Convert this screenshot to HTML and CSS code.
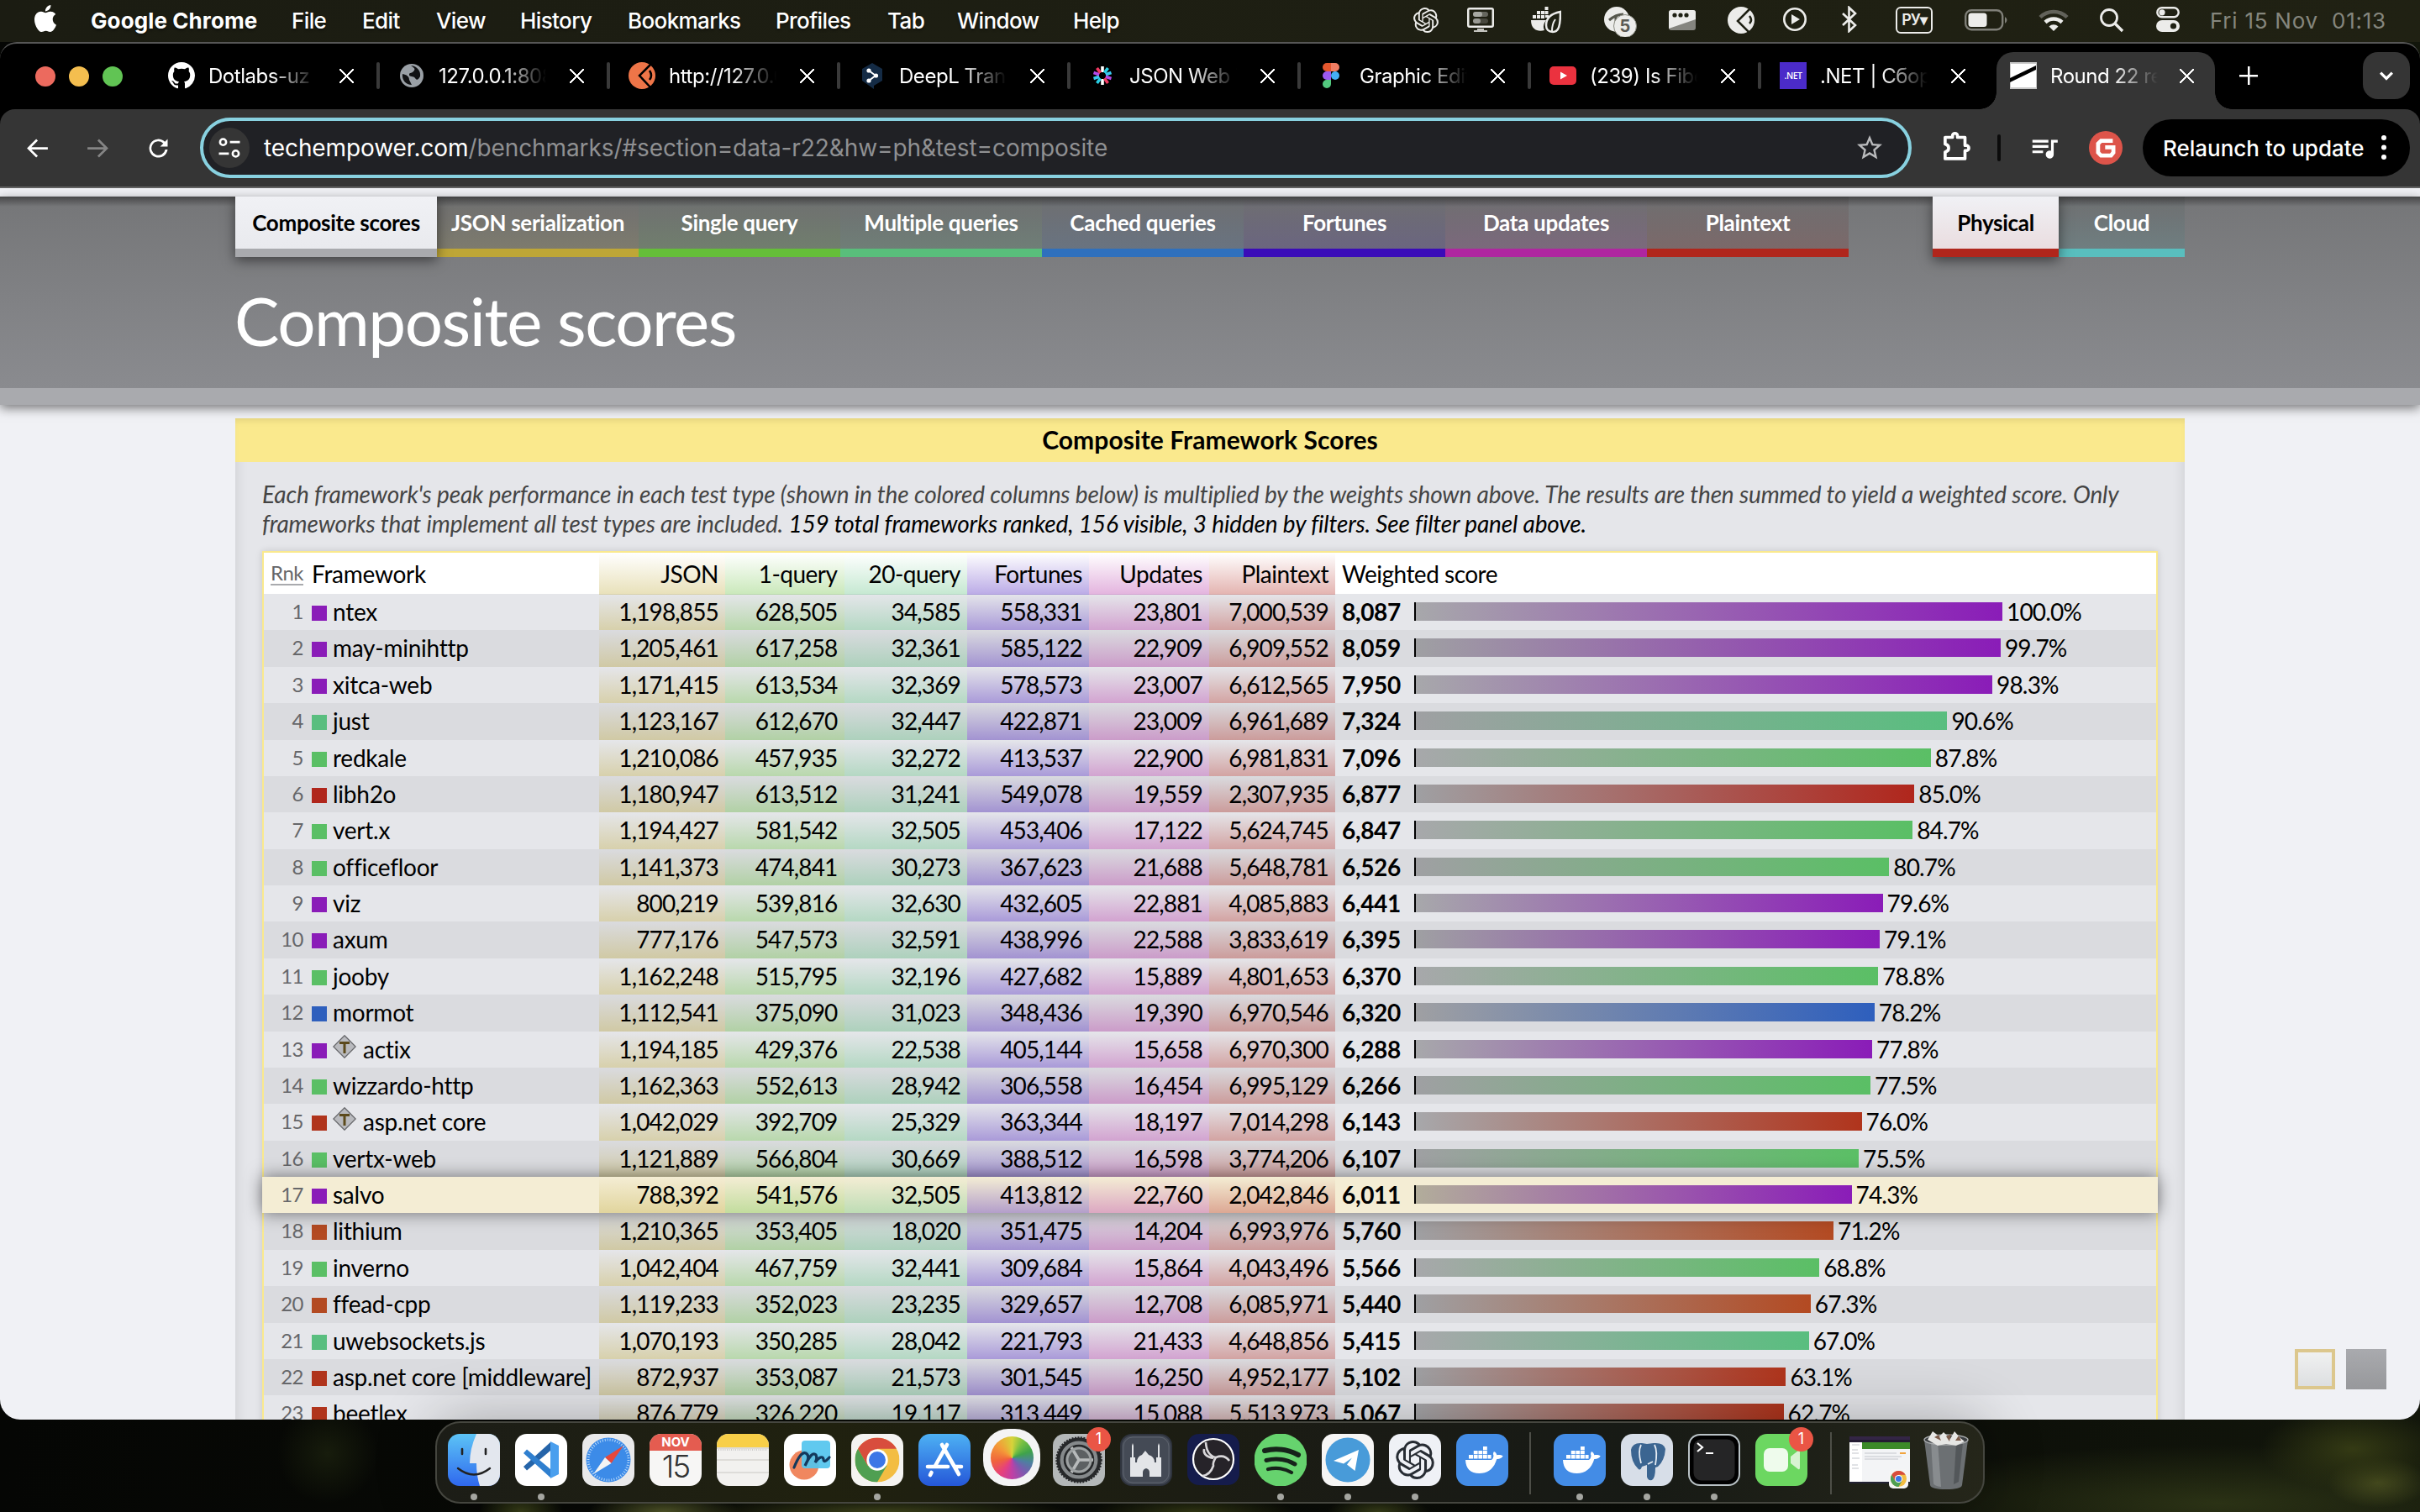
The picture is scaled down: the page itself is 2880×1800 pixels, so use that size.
FILE: index.html
```html
<!DOCTYPE html>
<html lang="en">
<head>
<meta charset="utf-8">
<title>Round 22 results - TechEmpower Framework Benchmarks</title>
<link rel="stylesheet" href="styles.css">
</head>
<body>
<svg class="defs" width="0" height="0" aria-hidden="true">
  <symbol id="gpt" viewBox="0 0 24 24"><path d="M22.2819 9.8211a5.9847 5.9847 0 0 0-.5157-4.9108 6.0462 6.0462 0 0 0-6.5098-2.9A6.0651 6.0651 0 0 0 4.9807 4.1818a5.9847 5.9847 0 0 0-3.9977 2.9 6.0462 6.0462 0 0 0 .7427 7.0966 5.98 5.98 0 0 0 .511 4.9107 6.051 6.051 0 0 0 6.5146 2.9001A5.9847 5.9847 0 0 0 13.2599 24a6.0557 6.0557 0 0 0 5.7718-4.2058 5.9894 5.9894 0 0 0 3.9977-2.9001 6.0557 6.0557 0 0 0-.7475-7.0729zm-9.022 12.6081a4.4755 4.4755 0 0 1-2.8764-1.0408l.1419-.0804 4.7783-2.7582a.7948.7948 0 0 0 .3927-.6813v-6.7369l2.02 1.1686a.071.071 0 0 1 .038.0615v5.5826a4.504 4.504 0 0 1-4.4945 4.4944zm-9.6607-4.1254a4.4708 4.4708 0 0 1-.5346-3.0137l.142.0852 4.783 2.7582a.7712.7712 0 0 0 .7806 0l5.8428-3.3685v2.3324a.0804.0804 0 0 1-.0332.0615L9.74 19.9502a4.4992 4.4992 0 0 1-6.1408-1.6464zM2.3408 7.8956a4.485 4.485 0 0 1 2.3655-1.9728V11.6a.7664.7664 0 0 0 .3879.6765l5.8144 3.3543-2.0201 1.1685a.0757.0757 0 0 1-.071 0l-4.8303-2.7865A4.504 4.504 0 0 1 2.3408 7.872zm16.5963 3.8558L13.1038 8.364 15.1192 7.2a.0757.0757 0 0 1 .071 0l4.8303 2.7913a4.4944 4.4944 0 0 1-.6765 8.1042v-5.6772a.79.79 0 0 0-.407-.667zm2.0107-3.0231l-.142-.0852-4.7735-2.7818a.7759.7759 0 0 0-.7854 0L9.409 9.2297V6.8974a.0662.0662 0 0 1 .0284-.0615l4.8303-2.7866a4.4992 4.4992 0 0 1 6.6802 4.66zM8.3065 12.863l-2.02-1.1638a.0804.0804 0 0 1-.038-.0567V6.0742a4.4992 4.4992 0 0 1 7.3757-3.4537l-.142.0805L8.704 5.459a.7948.7948 0 0 0-.3927.6813zm1.0976-2.3654l2.602-1.4998 2.6069 1.4998v2.9994l-2.5974 1.4997-2.6067-1.4997Z"/></symbol>
  <symbol id="chrome" viewBox="0 0 48 48"><circle cx="24" cy="24" r="24" fill="#f3bd42"/><path d="M24 0a24 24 0 0 1 20.800 12H24L13.600 30 3.200 12A24 24 0 0 1 24 0z" fill="#d84d3d"/><path d="M3.200 12A24 24 0 0 0 24 48l10.400-18H13.600z" fill="#4f9f52"/><circle cx="24" cy="24" r="11.500" fill="#fff"/><circle cx="24" cy="24" r="9" fill="#3c76e6"/></symbol>
  <symbol id="docker" viewBox="0 0 62 62"><rect width="62" height="62" rx="14" fill="#438ce6"/><g fill="#fff"><path d="M11 31H41c2.500 0 3-2.500 3.500-5-.8-2-.6-3.500.5-5 2 1 3 2.400 3.300 4.200 3-.6 5.200-.2 7.400 1.100-1.500 2.700-4 3.800-7.400 3.700C45 41.500 37.500 47 27.500 47 17 47 11.500 41.500 11 31z"/><path d="M15 25h5v4.500h-5zM20.800 25h4.800v4.500h-4.800zM26.400 25h4.800v4.500h-4.800zM32 25h4.800v4.500H32zM37.600 25h4v4.500h-4zM20.800 20h4.800v4.300h-4.800zM26.400 20h4.800v4.300h-4.800zM32 20h4.800v4.300H32zM32 15h4.800v4.300H32z"/></g></symbol>
</svg>

<div class="menubar">
  <svg class="apple" viewBox="0 0 24 24"><path fill="#fff" d="M12.152 6.896c-.948 0-2.415-1.078-3.960-1.040-2.040.027-3.910 1.183-4.961 3.014-2.117 3.675-.546 9.103 1.519 12.090 1.013 1.454 2.208 3.090 3.792 3.039 1.520-.065 2.090-.987 3.935-.987 1.831 0 2.350.987 3.960.948 1.637-.026 2.676-1.480 3.676-2.948 1.156-1.688 1.636-3.325 1.662-3.415-.039-.013-3.182-1.221-3.220-4.857-.026-3.040 2.480-4.494 2.597-4.559-1.429-2.090-3.623-2.324-4.390-2.376-2-.156-3.675 1.090-4.610 1.090zM15.530 3.830c.843-1.012 1.400-2.427 1.245-3.830-1.207.052-2.662.805-3.532 1.818-.780.896-1.454 2.338-1.273 3.714 1.338.104 2.715-.688 3.559-1.701"/></svg>
  <nav class="menus"><b>Google Chrome</b><span>File</span><span>Edit</span><span>View</span><span>History</span><span>Bookmarks</span><span>Profiles</span><span>Tab</span><span>Window</span><span>Help</span></nav>
  <div class="status">
    <svg class="s-gpt"><use href="#gpt"/></svg>
    <svg class="s-mon" viewBox="0 0 32 30"><path fill-rule="evenodd" d="M3 0h26a3 3 0 0 1 3 3v18a3 3 0 0 1-3 3H3a3 3 0 0 1-3-3V3a3 3 0 0 1 3-3zM2.500 2.500v19h27v-19z"/><path d="M12 25h8v2h4v2H8v-2h4z" opacity=".8"/><rect x="7" y="5" width="18" height="6" rx="3" opacity=".35"/><rect x="7" y="5" width="11" height="6" rx="3" opacity=".5"/><rect x="7" y="13" width="18" height="6" rx="3" opacity=".2"/><rect x="7" y="13" width="9" height="6" rx="3" opacity=".5"/></svg>
    <svg class="s-dock" viewBox="0 0 36 32"><path d="M0 16h18c-3 4-4 8-2 12-7 2-16 0-16-12zM2 10h4v4H2zM7 10h4v4H7zM12 10h4v4h-4zM7 5h4v4H7zM12 5h4v4h-4zM16.500 0h4v4h-4zM16.500 5h4v4h-4zM17 10h4v3h-4z"/><path d="M35 6c-10 2-17 7-17 16 0 5 3 8 8 8 7 0 9-7 9-24z" fill="#1e2013" stroke="#ececea" stroke-width="2.500"/><path d="M25 29c0-6 1-10 4-14" fill="none" stroke="#ececea" stroke-width="2"/></svg>
    <svg class="s-five" viewBox="0 0 40 36"><circle cx="16" cy="15" r="15"/><path d="M7 16q8-7 17-7M15 12v12" stroke="#55564c" stroke-width="3" fill="none"/><circle cx="26" cy="23" r="13.500" stroke="#8a8b82"/><text x="26" y="30" text-anchor="middle" class="five">5</text></svg>
    <svg class="s-win" viewBox="0 0 32 24"><rect width="32" height="24" rx="3" fill="#85857f"/><path d="M3 0h26a3 3 0 0 1 3 3v8L0 22V3a3 3 0 0 1 3-3z"/><g fill="#1e2013"><circle cx="7" cy="6" r="2.600"/><circle cx="14" cy="6" r="2.600"/><circle cx="21" cy="6" r="2.600"/></g></svg>
    <svg class="s-pac" viewBox="0 0 32 32"><circle cx="16" cy="16" r="16"/><path d="M27 2 12 17l15 15" fill="none" stroke="#1e2013" stroke-width="2.500"/><path d="M26 11q4 5 0 9" fill="none" stroke="#1e2013" stroke-width="2.500"/></svg>
    <svg class="s-play" viewBox="0 0 28 28"><circle cx="14" cy="14" r="12.700" fill="none" stroke="#ececea" stroke-width="2.600"/><path d="m10 8 10 6-10 6z"/></svg>
    <svg class="s-bt" viewBox="0 0 22 32"><path d="m3 9 15 14-7.500 7V2L18 9 3 23" fill="none" stroke="#ececea" stroke-width="2.600"/></svg>
    <div class="lang">PУ▾</div>
    <svg class="s-bat" viewBox="0 0 52 26"><rect x="1.200" y="1.200" width="44" height="23" rx="7" fill="none" stroke="#7f7f78" stroke-width="2.400"/><rect x="4.500" y="4.500" width="22" height="16.500" rx="3.500"/><path d="M48 9q5 3.500 0 8z" fill="#7f7f78"/></svg>
    <svg class="s-wifi" viewBox="0 0 36 26" fill="none" stroke="#ececea" stroke-width="4.500"><path d="M2 9.500a23 23 0 0 1 32 0" stroke="#62625a"/><path d="M8 15.500a14.500 14.500 0 0 1 20 0"/><path d="m18 26-5.500-5.500a8 8 0 0 1 11 0z" fill="#ececea" stroke="none"/></svg>
    <svg class="s-find" viewBox="0 0 30 30" fill="none" stroke="#ececea" stroke-width="2.800"><circle cx="12" cy="12" r="9.500"/><path d="m19 19 9 9" stroke-width="3.400"/></svg>
    <svg class="s-cc" viewBox="0 0 28 30"><rect x="1.300" y="1.300" width="25.400" height="11" rx="5.500" fill="none" stroke="#ececea" stroke-width="2.400"/><circle cx="7" cy="6.800" r="3.600"/><rect y="16" width="28" height="14" rx="7"/><circle cx="20.500" cy="23" r="3.600" fill="#1e2013"/></svg>
    <span class="clock">Fri 15 Nov&nbsp; 01:13</span>
  </div>
</div>

<div class="window">
  <div class="tabstrip">
    <div class="lights"><i></i><i></i><i></i></div>
    <div class="tab"><svg viewBox="0 0 16 16"><path fill="#fff" d="M8 0C3.580 0 0 3.580 0 8c0 3.540 2.290 6.530 5.470 7.590.4.070.55-.17.55-.38 0-.19-.01-.82-.01-1.490-2.010.37-2.530-.49-2.690-.94-.09-.23-.48-.94-.82-1.130-.28-.15-.68-.52-.01-.53.63-.01 1.080.58 1.230.82.72 1.210 1.870.87 2.330.66.07-.52.28-.87.51-1.070-1.780-.2-3.640-.89-3.640-3.950 0-.87.31-1.590.82-2.150-.08-.2-.36-1.020.08-2.120 0 0 .67-.21 2.200.82.64-.18 1.320-.27 2-.27s1.360.09 2 .27c1.530-1.040 2.200-.82 2.200-.82.44 1.100.16 1.920.08 2.120.51.56.82 1.270.82 2.150 0 3.070-1.870 3.750-3.650 3.950.29.25.54.73.54 1.480 0 1.070-.01 1.930-.01 2.200 0 .21.15.46.55.38A8.010 8.010 0 0 0 16 8c0-4.420-3.580-8-8-8z"/></svg><span>Dotlabs-uz</span><em></em></div>
    <div class="tab"><svg viewBox="0 0 32 32"><circle cx="16" cy="16" r="14" fill="#9aa0a6"/><path d="M5 14c5 1 8 3 8 7l3 6c-7 0-12-6-11-13zM15 4c4 3 6 4 3 7s-5 1-5 4 5 1 7 4 4 2 6-2c1-6-3-12-11-13z" fill="#111214"/></svg><span>127.0.0.1:8080</span><em></em></div>
    <div class="tab"><svg viewBox="0 0 32 32"><circle cx="16" cy="16" r="16" fill="#ee7548"/><path d="M27 2 13 16l14 15M25 10q4 6 0 11" fill="none" stroke="#000" stroke-width="2.500"/></svg><span>http://127.0.0.1</span><em></em></div>
    <div class="tab"><svg viewBox="0 0 32 32"><path d="m16 1 12 7v14L18 28v4L4 22V8z" fill="#142b45"/><path d="m12 10 8 6-8 6" stroke="#fff" stroke-width="2" fill="none"/><g fill="#fff"><circle cx="12" cy="10" r="2.600"/><circle cx="20.500" cy="16" r="2.600"/><circle cx="12" cy="22" r="2.600"/></g></svg><span>DeepL Translate</span><em></em></div>
    <div class="tab"><svg viewBox="-16 -16 32 32" stroke-width="3.600"><path d="M0-11V-4M0 11V4" stroke="#fff"/><path d="m6.500-9-4.100 5.700M-6.500 9l4.100-5.700" stroke="#29cfe5"/><path d="m10.500-3.500-6.700 2.200M-10.500 3.500l6.700-2.200" stroke="#39c9f0"/><path d="m10.500 3.500-6.700-2.200M-10.500-3.500l6.700 2.200" stroke="#b44ae8"/><path d="m6.500 9-4.100-5.700M-6.500-9l4.100 5.700" stroke="#f23a63"/></svg><span>JSON Web Tok</span><em></em></div>
    <div class="tab"><svg viewBox="0 0 32 32"><path d="M9 1h5v10H9A5 5 0 0 1 9 1z" fill="#e4572e"/><path d="M14 1h5a5 5 0 0 1 0 10h-5z" fill="#f17e63"/><path d="M9 11h5v10H9a5 5 0 0 1 0-10z" fill="#9b59f0"/><circle cx="19" cy="16" r="5" fill="#44aef5"/><path d="M9 21h5v5a5 5 0 1 1-5-5z" fill="#53c97f"/></svg><span>Graphic Editor</span><em></em></div>
    <div class="tab"><svg viewBox="0 0 32 32"><rect y="5" width="32" height="22" rx="5" fill="#eb323f"/><path d="m13 11.500 8 4.500-8 4.500z" fill="#fff"/></svg><span>(239) Is Fiber</span><em></em></div>
    <div class="tab last"><svg viewBox="0 0 32 32"><rect width="32" height="32" fill="#4b2bc9"/><text x="16" y="20" text-anchor="middle" class="net">.NET</text></svg><span>.NET | Сборка</span><em></em></div>
    <div class="tab active"><svg viewBox="0 0 32 32"><rect width="32" height="32" fill="#c9c9c9"/><rect x="1" y="2" width="30" height="28" fill="#fff"/><path d="M0 19 31 4v5L0 24z" fill="#000"/></svg><span>Round 22 results</span><em></em></div>
    <div class="plus"></div>
    <div class="chev"><svg viewBox="0 0 16 16"><path d="m3 5.500 5 5 5-5" fill="none" stroke="#fff" stroke-width="2.300"/></svg></div>
  </div>

  <div class="toolbar">
    <svg class="nav" viewBox="0 0 24 24"><path fill="#fff" d="M21 11H6.800l5.600-5.600L11 4l-8 8 8 8 1.400-1.400L6.800 13H21z"/></svg>
    <svg class="nav" viewBox="0 0 24 24"><path fill="#858585" d="M3 11h14.200l-5.600-5.600L13 4l8 8-8 8-1.400-1.400 5.600-5.600H3z"/></svg>
    <svg class="nav" viewBox="0 0 24 24"><path fill="#fff" d="M17.650 6.350A8 8 0 1 0 20 13h-2.100a6 6 0 1 1-1.670-5.240L13.500 10.500H20V4z"/></svg>
    <div class="omni">
      <div class="site"><svg viewBox="0 0 24 24" fill="none" stroke="#fff" stroke-width="2.100"><circle cx="6" cy="6.500" r="2.900"/><path d="M12.500 6.500H22M2 17.500h9.500"/><circle cx="18" cy="17.500" r="2.900"/></svg></div>
      <p>techempower.com<span>/benchmarks/#section=data-r22&amp;hw=ph&amp;test=composite</span></p>
      <svg class="star" viewBox="0 0 24 24"><path fill="#b9babc" d="m22 9.240-7.190-.62L12 2 9.190 8.630 2 9.240l5.460 4.730L5.820 21 12 17.270 18.180 21l-1.630-7.030zM12 15.400l-3.760 2.270 1-4.280-3.320-2.880 4.380-.38L12 6.100l1.710 4.040 4.380.38-3.320 2.880 1 4.280z"/></svg>
    </div>
    <svg class="puzzle" viewBox="0 0 24 24"><path fill="none" stroke="#fff" stroke-width="2.100" stroke-linejoin="round" d="M4.500 6h5V5a1.700 1.700 0 0 1 3.400 0v1H18v5.500h.8a1.800 1.800 0 0 1 0 3.600H18V20.500H4.500V16c3.200-.8 3.200-4.600 0-5.500z"/></svg>
    <i class="bar"></i>
    <svg class="music" viewBox="0 0 24 24"><path fill="#fff" d="M15 6H3v2h12zm0 4H3v2h12zM3 16h8v-2H3zM17 6v8.180a3 3 0 1 0 2 2.820V8h3V6z"/></svg>
    <div class="avatar"><svg viewBox="0 0 20 20"><path d="M16 4H6L3.500 6.500V14L6 16.500h8.500L16.500 14V9.500H9.500" fill="none" stroke="#fff" stroke-width="3.400"/></svg></div>
    <div class="relaunch">Relaunch to update<svg viewBox="0 0 8 32"><circle cx="4" cy="4" r="3"/><circle cx="4" cy="15.500" r="3"/><circle cx="4" cy="27" r="3"/></svg></div>
  </div>

  <div class="page">
    <header class="hero">
      <div class="tests">
        <a class="t-comp sel">Composite scores</a><a class="t-json">JSON serialization</a><a class="t-single">Single query</a><a class="t-multi">Multiple queries</a><a class="t-cached">Cached queries</a><a class="t-fort">Fortunes</a><a class="t-upd">Data updates</a><a class="t-plain">Plaintext</a>
        <div class="hw"><a class="t-plain sel">Physical</a><a class="t-cloud">Cloud</a></div>
      </div>
      <h1>Composite scores</h1>
    </header>
    <section class="panel">
      <h2>Composite Framework Scores</h2>
      <p class="intro">Each framework's peak performance in each test type (shown in the colored columns below) is multiplied by the weights shown above. The results are then summed to yield a weighted score. Only<br>frameworks that implement all test types are included. <b>159 total frameworks ranked, 156 visible, 3 hidden by filters. See filter panel above.</b></p>
      <div class="scores" id="scores">
        <div class="row head"><span class="rank"><u>Rnk</u></span><span class="name">Framework</span><span class="c1">JSON</span><span class="c2">1-query</span><span class="c3">20-query</span><span class="c4">Fortunes</span><span class="c5">Updates</span><span class="c6">Plaintext</span><span class="ws">Weighted score</span></div>
      </div>
    </section>
    <div class="themes"><i></i><i></i></div>
  </div>
</div>

<div class="dock">
  <div class="app run"><svg viewBox="0 0 62 62"><defs><linearGradient id="fb" x2="0" y2="1"><stop stop-color="#5cc4f6"/><stop offset="1" stop-color="#2f68ee"/></linearGradient><clipPath id="rr"><rect width="62" height="62" rx="14"/></clipPath></defs><g clip-path="url(#rr)"><rect width="62" height="62" fill="url(#fb)"/><path d="M34 0q-8 18-8 35h8q0 15 4 27h24V0z" fill="#e3e7ee"/></g><path d="M17 18v6M45 18v6" stroke="#222" stroke-width="2.600" stroke-linecap="round"/><path d="M12 41q19 15 38 0" fill="none" stroke="#222" stroke-width="2.400" stroke-linecap="round"/></svg></div>
  <div class="app run"><svg viewBox="0 0 62 62"><rect width="62" height="62" rx="14" fill="#fff"/><path d="m10 39 4 4.500L42 20V10z" fill="#2564a9"/><path d="m10 23 4-4.500L42 42v10z" fill="#2f7fcf"/><path d="m42 9 10 5v34l-10 5z" fill="#4a9fee"/></svg></div>
  <div class="app"><svg viewBox="0 0 62 62"><rect width="62" height="62" rx="14" fill="#e9e9ea"/><circle cx="31" cy="31" r="26.500" fill="#3c8be8"/><circle cx="31" cy="31" r="24" fill="none" stroke="#b8d9fa" stroke-width="3" stroke-dasharray="1 2"/><path d="M49 14 34.500 35 27 28z" fill="#e5483c"/><path d="M13 48 27 28l7.500 7z" fill="#f4f4f4"/></svg></div>
  <div class="app"><svg viewBox="0 0 62 62"><rect width="62" height="62" rx="14" fill="#f7f6f5"/><path d="M0 20v-6A14 14 0 0 1 14 0h34a14 14 0 0 1 14 14v6z" fill="#e45c50"/><text x="31" y="15" class="mon">NOV</text><text x="31" y="52" class="day">15</text></svg></div>
  <div class="app"><svg viewBox="0 0 62 62"><rect width="62" height="62" rx="14" fill="#f2f1ef"/><path d="M0 16v-2A14 14 0 0 1 14 0h34a14 14 0 0 1 14 14v2z" fill="#f8cf48"/><path d="M0 17h62M0 31h62M0 46h62" stroke="#c9c7c2"/><path d="M2 19h58" stroke="#aaa" stroke-dasharray="1 1.500"/></svg></div>
  <div class="app"><svg viewBox="0 0 62 62"><rect width="62" height="62" rx="14" fill="#fff"/><circle cx="24" cy="37" r="17.500" fill="#f0875f"/><rect x="21" y="8" width="34" height="33" rx="4" fill="#52c4ee" opacity=".92"/><path d="M12 40q8-20 14-17t-1 15q8-18 13-13 2 4-1 9 8-10 10-4 0 6 7-2" fill="none" stroke="#14395c" stroke-width="3.200" stroke-linecap="round"/></svg></div>
  <div class="app run"><svg viewBox="0 0 62 62"><rect width="62" height="62" rx="14" fill="#f4f3f1"/><use href="#chrome" x="4.500" y="4.500" width="53" height="53"/></svg></div>
  <div class="app"><svg viewBox="0 0 62 62"><defs><linearGradient id="as" x2="0" y2="1"><stop stop-color="#4db1f4"/><stop offset="1" stop-color="#2557d8"/></linearGradient></defs><rect width="62" height="62" rx="14" fill="url(#as)"/><path d="M34 13 20 38M15.500 46l-1.500 3M28 13l20 35M11 39h24M43 39h8" stroke="#fff" stroke-width="4.600" stroke-linecap="round"/></svg></div>
  <div class="app big"><div class="wheel"></div></div>
  <div class="app"><svg viewBox="0 0 62 62"><rect width="62" height="62" rx="14" fill="#b4b8b9"/><circle cx="31" cy="31" r="24.500" fill="#85898b" stroke="#26282a" stroke-width="4" /><circle cx="31" cy="31" r="26.500" fill="none" stroke="#26282a" stroke-width="2.500" stroke-dasharray="2 1.500"/><circle cx="31" cy="31" r="17" fill="#5c6062" stroke="#26282a" stroke-width="2.500"/><path d="M31 31h17M31 31l-9-15M31 31l-9 15" stroke="#b7babb" stroke-width="3.500"/><circle cx="31" cy="31" r="14" fill="none" stroke="#9da1a2" stroke-width="3"/></svg><span class="badge">1</span></div>
  <div class="app"><svg viewBox="0 0 62 62"><rect x="1" y="1" width="60" height="60" rx="13" fill="#444a55" stroke="#2f343e" stroke-width="2"/><rect x="4" y="4" width="54" height="54" rx="11" fill="none" stroke="#5f6570"/><path d="M12 51V28h2V14l1-3 1 3v14h2v6h2q0-7 6-9l4-5 4 5q7 2 7 9h2v-6h2V14l1-3 1 3v14h2v23H35v-5q0-4-4-5-4 1-4 5v5z" fill="#e3e5e8"/></svg></div>
  <div class="app"><svg viewBox="0 0 62 62"><rect width="62" height="61" rx="14" fill="#151c4c"/><circle cx="31" cy="30" r="24" fill="#262329" stroke="#fff" stroke-width="2.200"/><path d="M22 10q1 16 12 18 10-4 16 4M34 28q-4 6-3 10-4 11-13 12M20 18q-2 8 11 11" fill="none" stroke="#d9d7da" stroke-width="2.600"/></svg></div>
  <div class="app run"><svg viewBox="0 0 62 62"><circle cx="31" cy="31" r="31.500" fill="#66d36e"/><g fill="none" stroke="#16231a" stroke-linecap="round"><path d="M12 20q21-5 40 5" stroke-width="6"/><path d="M14 31.500q18-4.500 34 4.500" stroke-width="5"/><path d="M16 42q15-3.500 28 4" stroke-width="4.200"/></g></svg></div>
  <div class="app run"><svg viewBox="0 0 62 62"><rect width="62" height="62" rx="14" fill="#f6f5f4"/><circle cx="31" cy="31" r="26.500" fill="#489bd9"/><path d="M14 32 44 19l-4.500 25-9.500-7.500 6-8-10 7z" fill="#fff"/></svg></div>
  <div class="app run"><svg viewBox="0 0 62 62"><rect width="62" height="62" rx="14" fill="#eff1f6"/><use href="#gpt" x="8" y="8" width="46" height="46" fill="#272c33"/></svg></div>
  <div class="app"><svg><use href="#docker"/></svg></div>
  <i class="split s1"></i>
  <div class="app run"><svg><use href="#docker"/></svg></div>
  <div class="app run"><svg viewBox="0 0 62 62"><rect width="62" height="62" rx="14" fill="#d7dee8"/><path d="M12 19q2-9 13-8l6 1 8-1q12-1 14 7-1 14-9 21l-3 1q0 13-4 15-5 1-6-4V37l-6 2q-2 6-5 2-8-8-8-22z" fill="#3b6591"/><path d="M24 13q-4 8 0 22M40 13q4 8 1 24M32 36l6-3" fill="none" stroke="#e7edf4" stroke-width="1.800"/></svg></div>
  <div class="app run"><svg viewBox="0 0 62 62"><rect width="62" height="62" rx="14" fill="#b9c2c6"/><rect x="2" y="2" width="58" height="58" rx="12" fill="#000"/><rect x="6.500" y="6.500" width="49" height="49" rx="9" fill="#252526"/><path d="m11 11 6 5-6 5M21 23h9" fill="none" stroke="#fff" stroke-width="2.200"/></svg></div>
  <div class="app"><svg viewBox="0 0 62 62"><rect width="62" height="62" rx="14" fill="#6cd761"/><rect x="10" y="17" width="29" height="28" rx="7" fill="#eefbec"/><path d="m42 27 9-7q2-1 2 2v18q0 3-2 2l-9-7z" fill="#d7f3d2"/></svg><span class="badge">1</span></div>
  <i class="split s2"></i>
  <div class="thumb"><svg viewBox="0 0 72 64"><rect width="72" height="56" fill="#f3f4f6"/><rect width="72" height="4" fill="#332545"/><rect y="4" width="72" height="3" fill="#241b33"/><rect x="15" y="7" width="57" height="8" fill="#3c8a29"/><rect y="7" width="15" height="47" fill="#fff"/><rect y="54" width="72" height="2" fill="#223"/><rect x="60" y="19" width="7" height="2" fill="#f1a33c"/><path d="M18 20h38M18 24h44M18 27h40M3 10h9M3 16h7M3 20h8M3 26h9M3 34h7M3 38h8" stroke="#c3c6cc"/><rect x="47" y="39" width="23" height="23" rx="5" fill="#f5f5f5"/><use href="#chrome" x="49" y="41" width="19" height="19"/></svg></div>
  <div class="trash"><svg viewBox="0 0 56 72"><path d="M2 12h52l-7 54q-1 5-19 5T9 66z" fill="#6c7073"/><path d="M10 14h8l4 54q-8-1-9-4z" fill="#94989b" opacity=".7"/><path d="M40 16h8l-5 46-6 3z" fill="#4d5154" opacity=".8"/><ellipse cx="28" cy="12" rx="26" ry="6" fill="#3c3f42" stroke="#a5a8aa" stroke-width="1.500"/><path d="m6 12 6-10 8 6 5-5 8 8 5-9 7 8 5 4-10 5-12-2-10 2z" fill="#e6e6e4"/><path d="m14 9 5-3 3 7zM28 8l6-3-2 9zM39 13l4-6 3 6z" fill="#7b5b4a"/></svg></div>
</div>
<script src="script.js"></script>
</body>
</html>
```
FILE: script.js
```js
const purple = "#8a1cb8", teal = "#59be7f", green = "#5abf65", red = "#b0261c",
      blue = "#2e5fbd", brick = "#b0341c", rust = "#b34a22";

const data = [
  ["ntex", purple, "1,198,855", "628,505", "34,585", "558,331", "23,801", "7,000,539", "8,087", 100.0],
  ["may-minihttp", purple, "1,205,461", "617,258", "32,361", "585,122", "22,909", "6,909,552", "8,059", 99.7],
  ["xitca-web", purple, "1,171,415", "613,534", "32,369", "578,573", "23,007", "6,612,565", "7,950", 98.3],
  ["just", teal, "1,123,167", "612,670", "32,447", "422,871", "23,009", "6,961,689", "7,324", 90.6],
  ["redkale", green, "1,210,086", "457,935", "32,272", "413,537", "22,900", "6,981,831", "7,096", 87.8],
  ["libh2o", red, "1,180,947", "613,512", "31,241", "549,078", "19,559", "2,307,935", "6,877", 85.0],
  ["vert.x", green, "1,194,427", "581,542", "32,505", "453,406", "17,122", "5,624,745", "6,847", 84.7],
  ["officefloor", green, "1,141,373", "474,841", "30,273", "367,623", "21,688", "5,648,781", "6,526", 80.7],
  ["viz", purple, "800,219", "539,816", "32,630", "432,605", "22,881", "4,085,883", "6,441", 79.6],
  ["axum", purple, "777,176", "547,573", "32,591", "438,996", "22,588", "3,833,619", "6,395", 79.1],
  ["jooby", green, "1,162,248", "515,795", "32,196", "427,682", "15,889", "4,801,653", "6,370", 78.8],
  ["mormot", blue, "1,112,541", "375,090", "31,023", "348,436", "19,390", "6,970,546", "6,320", 78.2],
  ["actix", purple, "1,194,185", "429,376", "22,538", "405,144", "15,658", "6,970,300", "6,288", 77.8, "T"],
  ["wizzardo-http", green, "1,162,363", "552,613", "28,942", "306,558", "16,454", "6,995,129", "6,266", 77.5],
  ["asp.net core", brick, "1,042,029", "392,709", "25,329", "363,344", "18,197", "7,014,298", "6,143", 76.0, "T"],
  ["vertx-web", green, "1,121,889", "566,804", "30,669", "388,512", "16,598", "3,774,206", "6,107", 75.5],
  ["salvo", purple, "788,392", "541,576", "32,505", "413,812", "22,760", "2,042,846", "6,011", 74.3],
  ["lithium", rust, "1,210,365", "353,405", "18,020", "351,475", "14,204", "6,993,976", "5,760", 71.2],
  ["inverno", green, "1,042,404", "467,759", "32,441", "309,684", "15,864", "4,043,496", "5,566", 68.8],
  ["ffead-cpp", rust, "1,119,233", "352,023", "23,235", "329,657", "12,708", "6,085,971", "5,440", 67.3],
  ["uwebsockets.js", teal, "1,070,193", "350,285", "28,042", "221,793", "21,433", "4,648,856", "5,415", 67.0],
  ["asp.net core [middleware]", brick, "872,937", "353,087", "21,573", "301,545", "16,250", "4,952,177", "5,102", 63.1],
  ["beetlex", brick, "876,779", "326,220", "19,117", "313,449", "15,088", "5,513,973", "5,067", 62.7],
];

const highlighted = "salvo";
const troubled = '<svg class="flag" viewBox="0 0 28 28"><path d="M14 .8 27.200 14 14 27.200.8 14z" fill="#b9babe" stroke="#66676a" stroke-width="1.300"/><path d="M8 9.500h12M14 9v13" stroke="#5c4a1c" stroke-width="3"/></svg>';

document.getElementById("scores").insertAdjacentHTML("beforeend", data.map((r, i) => {
  const [name, color, ...rest] = r;
  const cells = rest.slice(0, 6).map((v, k) => `<span class="c${k + 1}">${v}</span>`).join("");
  return `<div class="row${name === highlighted ? " mark" : ""}">
    <span class="rank">${i + 1}</span>
    <span class="name"><i style="background:${color}"></i>${rest[8] ? troubled : ""}${name}</span>
    ${cells}
    <span class="total">${rest[6]}</span>
    <span class="meter"><i style="width:${(rest[7] * 6.98).toFixed(1)}px;--lang:${color}"></i>${rest[7].toFixed(1)}%</span>
  </div>`;
}).join(""));
```
FILE: styles.css
```css
* { box-sizing: border-box; }
body {
  margin: 0; width: 2880px; height: 1800px; overflow: hidden; position: relative;
  font-family: Inter, "Liberation Sans", sans-serif;
  background:
    radial-gradient(ellipse 110px 50px at 2800px 1725px, #343a14, transparent),
    radial-gradient(ellipse 60px 30px at 2830px 1765px, #454a1e, transparent),
    radial-gradient(ellipse 420px 70px at 2640px 1790px, #2b3215, transparent),
    radial-gradient(ellipse 60px 60px at 390px 1730px, #171c0c, transparent),
    radial-gradient(ellipse 50px 30px at 620px 1800px, #3b4219, transparent),
    radial-gradient(ellipse 90px 24px at 790px 1800px, #545a2a, transparent),
    radial-gradient(ellipse 220px 20px at 1050px 1800px, #42481d, transparent),
    radial-gradient(ellipse 120px 20px at 1420px 1800px, #343a15, transparent),
    radial-gradient(ellipse 60px 20px at 1640px 1800px, #3b421a, transparent),
    linear-gradient(90deg, #050604, #0a0c07 40%, #0b0d08 75%, #12160b);
}
.defs { position: absolute; }
svg { display: block; flex: none; }

/* menu bar */
.menubar { height: 50px; display: flex; align-items: center; background: linear-gradient(90deg, #1b1c12, #202113); color: #fff; font-size: 26px; white-space: nowrap; padding-bottom: 2px; }
.apple { width: 34px; height: 32px; margin: -4px 32px 0 37px; }
.menus { display: grid; grid-template-columns: 239px 84px 88px 100px 128px 176px 133px 83px 138px 100px; margin-left: 5px; margin-right: 1px; letter-spacing: -.6px; font-weight: 450; text-shadow: 0 2px 3px rgba(0,0,0,.4); }
.menus b { font-weight: 700; letter-spacing: .1px; }
.status { display: flex; align-items: center; margin-left: 304px; fill: #ececea; }
.s-gpt { width: 30px; height: 30px; }
.s-mon { width: 32px; height: 30px; margin-left: 34px; }
.s-dock { width: 36px; height: 32px; margin-left: 44px; }
.s-five { width: 40px; height: 36px; margin: 3px 0 0 50px; }
.five { font: 700 20px Inter, sans-serif; fill: #5a5a54; }
.s-win { width: 32px; height: 24px; margin-left: 38px; }
.s-pac { width: 32px; height: 32px; margin-left: 38px; }
.s-play { width: 28px; height: 28px; margin: -2px 0 0 34px; }
.s-bt { width: 22px; height: 32px; margin: -2px 0 0 40px; }
.lang { width: 44px; height: 32px; margin: -1px 0 0 44px; border: 2.500px solid #ececea; border-radius: 6px; font-size: 18px; font-weight: 600; line-height: 27px; text-align: center; letter-spacing: -1px; color: #ececea; }
.s-bat { width: 52px; height: 26px; margin-left: 38px; }
.s-wifi { width: 36px; height: 26px; margin-left: 36px; }
.s-find { width: 30px; height: 30px; margin-left: 36px; }
.s-cc { width: 28px; height: 30px; margin: -3px 0 0 38px; }
.clock { margin-left: 36px; color: #85867d; letter-spacing: .75px; }

/* browser window */
.window { height: 1640px; border-radius: 20px 20px 24px 24px; overflow: hidden; background: #000; display: flex; flex-direction: column; border-top: 2px solid #565656; }
.tabstrip { height: 78px; display: flex; align-items: flex-start; padding-left: 42px; flex: none; }
.lights { display: flex; gap: 16px; width: 136px; padding-top: 27px; }
.lights i { width: 24px; height: 24px; border-radius: 50%; background: #ec6a5e; }
.lights i:nth-child(2) { background: #f4be4f; }
.lights i:nth-child(3) { background: #61c454; }
.tab { width: 274px; height: 68px; margin-top: 10px; display: flex; align-items: center; padding: 0 0 12px 22px; color: #fff; font-size: 24px; letter-spacing: -.45px; position: relative; flex: none; }
.tab svg { width: 32px; height: 32px; }
.tab span { width: 128px; flex: none; margin: 0 28px 0 16px; overflow: hidden; white-space: nowrap; -webkit-mask-image: linear-gradient(90deg, #000 58%, transparent 100%); mask-image: linear-gradient(90deg, #000 58%, transparent 100%); }
.tab em { width: 17px; height: 17px; flex: none; background: linear-gradient(45deg, transparent 46%, #fff 46%, #fff 54%, transparent 54%), linear-gradient(-45deg, transparent 46%, #fff 46%, #fff 54%, transparent 54%); }
.tab:not(.last):not(.active)::after { content: ""; width: 4px; height: 32px; border-radius: 2px; background: #3a3a3a; margin-left: 27px; flex: none; }
.tab.active { width: 260px; padding-left: 16px; margin-left: 6px; background: #353535; border-radius: 20px 20px 0 0; }
.tab.active::before, .tab.active::after { content: ""; position: absolute; bottom: 0; width: 20px; height: 20px; left: -20px; background: radial-gradient(circle at 0 0, transparent 19.500px, #353535 20px); }
.tab.active::after { left: auto; right: -20px; background: radial-gradient(circle at 100% 0, transparent 19.500px, #353535 20px); }
.tab.active span { margin-right: 26px; }
.plus { width: 22px; height: 22px; margin: 27px 0 0 29px; background: linear-gradient(#fff, #fff) center/22px 2.500px no-repeat, linear-gradient(#fff, #fff) center/2.500px 22px no-repeat; }
.chev { margin: 10px 12px 0 auto; width: 56px; height: 56px; border-radius: 18px; background: #353535; display: grid; place-items: center; }
.chev svg { width: 22px; height: 22px; }
.toolbar { height: 94px; flex: none; background: #353535; border-bottom: 2px solid #606060; border-radius: 18px 18px 0 0; display: flex; align-items: center; padding-left: 28px; }
.nav { width: 33px; height: 33px; margin-right: 39px; }
.omni { width: 2037px; height: 72px; border: 4px solid #88d1e0; border-radius: 36px; background: #202125; display: flex; align-items: center; margin-left: -6px; padding-left: 7px; }
.site { width: 48px; height: 48px; border-radius: 50%; background: #353535; display: grid; place-items: center; }
.site svg { width: 30px; height: 30px; }
.omni p { margin: 0 0 0 17px; font-size: 28px; color: #fff; letter-spacing: -.1px; }
.omni p span { color: #8f9092; }
.star { width: 36px; height: 36px; margin-left: auto; margin-right: 28px; }
.puzzle { width: 42px; height: 42px; margin: -4px 0 0 32px; }
.bar { width: 4px; height: 32px; border-radius: 2px; background: #0b0b0b; margin-left: 28px; }
.music { width: 38px; height: 38px; margin-left: 33px; }
.avatar { width: 40px; height: 40px; border-radius: 50%; background: #dd544a; margin-left: 34px; display: grid; place-items: center; }
.avatar svg { width: 28px; height: 28px; }
.relaunch { width: 318px; height: 68px; border-radius: 34px; background: #000; margin-left: 24px; color: #fff; font-size: 26px; display: flex; align-items: center; padding-left: 24px; white-space: nowrap; font-weight: 450; }
.relaunch svg { width: 8px; height: 32px; fill: #fff; margin-left: 19px; }

/* page */
.page { flex: 1; overflow: hidden; position: relative; background: #f0f1f5; padding-top: 10px; font-family: Lato, "Open Sans", sans-serif; color: #000; }
.hero { height: 248px; padding: 0 280px; border-bottom: 20px solid #a9aaae; background: linear-gradient(rgba(0,0,0,.4), transparent 12px), linear-gradient(#757678, #8a8b8f); box-shadow: 0 4px 12px rgba(0,0,0,.5); position: relative; }
.tests { display: flex; height: 72px; }
.tests a { width: 240px; height: 72px; border-bottom: 10px solid var(--c); background: linear-gradient(transparent, color-mix(in srgb, var(--c) 14%, transparent)), rgba(0,0,0,.06); color: #fff; font-weight: 700; font-size: 26px; line-height: 63px; text-align: center; letter-spacing: -.3px; white-space: nowrap; }
.hw { display: flex; margin-left: auto; }
.tests .hw a { width: 150px; }
.tests a.sel { background: linear-gradient(transparent, color-mix(in srgb, var(--c) 10%, transparent)), #f0f1f5; color: #000; box-shadow: 0 4px 14px rgba(0,0,0,.5); clip-path: inset(0 -20px -24px -20px); position: relative; }
.t-comp { --c: #a9aaae; } .t-json { --c: #bea637; } .t-single { --c: #65be39; } .t-multi { --c: #59be7b; }
.t-cached { --c: #2f70bd; } .t-fort { --c: #3a0cb8; } .t-upd { --c: #af26a0; } .t-plain { --c: #b0261c; } .t-cloud { --c: #59bebe; }
h1 { margin: 21px 0 0 -1px; font-weight: 400; font-size: 80px; line-height: 108px; color: #fff; letter-spacing: -1.500px; }
.panel { margin: 16px 280px 0; height: 1250px; background: #e5e6ea; box-shadow: inset 0 0 16px rgba(0,0,0,.12); }
h2 { margin: 0; height: 52px; line-height: 51px; text-align: center; font-size: 30px; font-weight: 700; letter-spacing: .08px; background: #fae98d; box-shadow: inset 0 6px 8px -4px rgba(0,0,0,.1); }
.intro { margin: 21px 0 0 32px; font-style: italic; font-size: 28px; line-height: 35px; color: #444; white-space: nowrap; letter-spacing: -.16px; }
.intro b { font-weight: 400; color: #000; }
.scores { margin: 15px 32px 0 32px; border: 2px solid #fae98d; border-bottom: 0; height: 1200px; box-shadow: 0 0 8px rgba(0,0,0,.14); background: #fff; }
.row { display: grid; grid-template-columns: 47px 352px 150px 141.500px 146.500px 145px 143px 150px auto 1fr; height: 43.390px; line-height: 43px; font-size: 28px; background: #e5e6ea; letter-spacing: -.85px; }
.row:nth-child(odd) { background: #dadbdf; }
.row > span { white-space: nowrap; }
.row.head { height: 49px; line-height: 50px; background: #fff; letter-spacing: -.5px; }
.rank { text-align: right; font-size: 24px; color: #66676a; letter-spacing: -.5px; line-height: 41px; }
.head .rank { line-height: 48px; }
.rank u { text-decoration-color: #a9aaae; text-underline-offset: 4px; text-decoration-thickness: 2px; }
.name { display: flex; padding-left: 10px; letter-spacing: -.25px; }
.name i { width: 18px; height: 18px; margin: 14px 7px 0 0; flex: none; }
.flag { width: 28px; height: 28px; margin: 4px 8px 0 0; }
.c1, .c2, .c3, .c4, .c5, .c6 { text-align: right; padding-right: 8px; background: linear-gradient(rgb(var(--k) / 0), rgb(var(--k) / .35)); }
.c1 { --k: 190 168 55; } .c2 { --k: 101 190 57; } .c3 { --k: 89 190 123; } .c4 { --k: 58 12 184; } .c5 { --k: 175 38 160; } .c6 { --k: 176 38 28; }
.ws { padding-left: 8px; grid-column: 9 / 11; }
.total { width: 94px; padding-right: 16px; text-align: right; font-weight: 700; letter-spacing: -.3px; }
.meter { display: flex; gap: 5px; }
.meter i { height: 22px; margin-top: 10px; border-left: 2px solid #000; box-sizing: content-box; background: linear-gradient(90deg, rgba(0,0,0,.27), var(--lang)); }
.row.mark { background: #f4edd4; box-shadow: 0 0 20px rgba(0,0,0,.5); position: relative; margin: 0 -2px; padding: 0 2px; }
.themes { position: absolute; right: 40px; bottom: 36px; display: flex; gap: 13px; }
.themes i { width: 48px; height: 48px; border: 4px solid #dcc78d; background: linear-gradient(#f0f1f1, #dddfe1); }
.themes i + i { border: 0; background: linear-gradient(#a9aaae, #97989b); }

/* dock */
.dock { position: absolute; left: 518px; top: 1692px; width: 1844px; height: 98px; border: 2px solid #45463f; border-radius: 30px; background: linear-gradient(90deg, #1c1d17, #20210f 25%, #1a1b15 60%, #171a15 78%, #25261a); display: flex; padding: 13px 0 0 13px; gap: 18px; box-shadow: 0 0 70px rgba(0,0,0,.3); }
.app { width: 62px; height: 62px; position: relative; flex: none; }
.app svg { width: 62px; height: 62px; }
.app.run::after { content: ""; position: absolute; left: 27px; top: 71px; width: 8px; height: 8px; border-radius: 50%; background: #a5a6a1; }
.big { width: 68px; height: 68px; margin: -6px -3px 0; border-radius: 30px; background: #f4f4f5; display: grid; place-items: center; }
.wheel { width: 51px; height: 51px; border-radius: 50%; background: conic-gradient(#d7d33a, #76c043 35deg, #3fa34a 70deg, #4d80a0 105deg, #7b5ab0 140deg, #c03fa5 180deg, #e6407d 215deg, #f0643c 260deg, #f49a38 310deg, #d7d33a); }
.badge { position: absolute; right: -7px; top: -8px; width: 29px; height: 29px; border-radius: 50%; background: #ea5545; color: #fff; font-size: 18px; line-height: 28px; text-align: center; }
.split { width: 2px; height: 74px; background: #4d4e47; flex: none; margin: -2px 9px 0 7px; }
.s2 { margin: -2px 4px 0 9px; }
.thumb svg { width: 72px; height: 64px; margin: 3px 0 0 -1px; }
.trash svg { width: 56px; height: 74px; margin: -6px 0 0 -3px; }
.mon { font: 700 15px Inter, sans-serif; fill: #fff; text-anchor: middle; }
.day { font: 300 37px Inter, sans-serif; fill: #333; text-anchor: middle; letter-spacing: -2px; }
.net { font: 600 10.500px "Open Sans", sans-serif; fill: #fff; }
```
